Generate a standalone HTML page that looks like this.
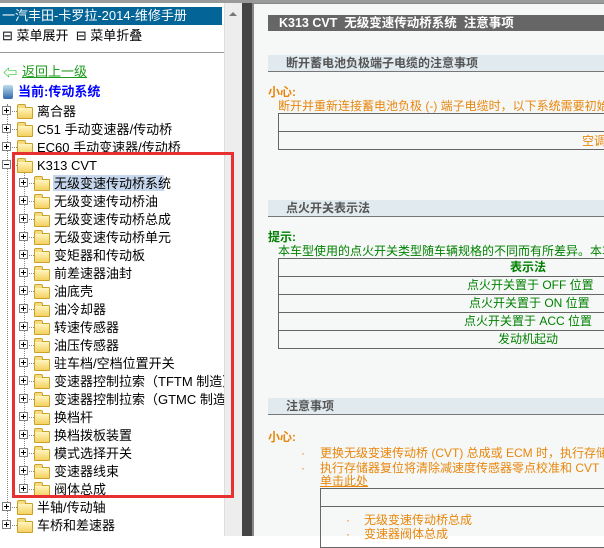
<!DOCTYPE html>
<html><head><meta charset="utf-8"><style>
*{margin:0;padding:0;box-sizing:border-box}
body{width:604px;height:536px;overflow:hidden;position:relative;background:#fff;font-family:"Liberation Sans","Noto Sans CJK SC","WenQuanYi Zen Hei",sans-serif;font-size:12px;color:#000}
.a{position:absolute;white-space:nowrap;line-height:16px}
.exp{position:absolute;width:9px;height:9px;border:1px solid #808080;background:#fff}
.exp:before{content:"";position:absolute;left:1px;top:3px;width:5px;height:1px;background:#000}
.exp.p:after{content:"";position:absolute;left:3px;top:1px;width:1px;height:5px;background:#000}
.fold{position:absolute;width:16px;height:12px;background:linear-gradient(#fff6c0,#f5d060);border:1px solid #c9a227;border-radius:1px}
.fold:before{content:"";position:absolute;left:-1px;top:-4px;width:7px;height:3px;background:#f5dc80;border:1px solid #c9a227;border-bottom:none;border-radius:2px 2px 0 0}
.dh{position:absolute;height:1px;border-top:1px dotted #888}
.or{color:#e8860c}
.gr{color:#008000}
.sec{position:absolute;left:268px;width:336px;height:17px;background:#e1ebef;border-bottom:1px solid #777;font-weight:bold;color:#555;padding-left:18px;line-height:16px;font-size:12px}
.tb{position:absolute;border:1px solid #666}
.hl{position:absolute;height:1px;background:#666}
</style></head><body>
<div class="a" style="left:0;top:0;width:604px;height:3px;background:#9a9a9a"></div>
<div class="a" style="left:0;top:7px;width:222px;height:18px;background:#036597;color:#fff;font-size:13px;line-height:18px;padding-left:2px">一汽丰田-卡罗拉-2014-维修手册</div>
<div class="a" style="left:2px;top:28px;font-size:13px">&#8863; 菜单展开 &nbsp;&#8863; 菜单折叠</div>
<div class="a" style="left:0;top:52px;width:224px;height:1px;background:#999"></div>
<div class="a" style="left:3px;top:65px;color:#0b0;font-size:14px">&#8678;</div>
<div class="a" style="left:22px;top:64px;color:#1a9a1a;text-decoration:underline;font-size:13px">返回上一级</div>
<div class="a" style="left:3px;top:85px;width:10px;height:14px;background:linear-gradient(#bde,#36a);border-radius:2px"></div>
<div class="a" style="left:18px;top:84px;color:#00f;font-weight:bold;font-size:13px">当前:传动系统</div>
<div class="a" style="left:7px;top:104px;width:1px;height:424px;border-left:1px dotted #888"></div>
<div class="a" style="left:24px;top:172px;width:1px;height:318px;border-left:1px dotted #888"></div>
<div class="a" style="left:53px;top:175px;width:111px;height:16px;background:#c6d7ed"></div>
<div id="tree"></div>
<script>
var rows=[[0,1,"离合器"],[0,1,"C51 手动变速器/传动桥"],[0,1,"EC60 手动变速器/传动桥"],[0,0,"K313 CVT"],
[1,1,"无级变速传动桥系统"],[1,1,"无级变速传动桥油"],[1,1,"无级变速传动桥总成"],[1,1,"无级变速传动桥单元"],[1,1,"变矩器和传动板"],[1,1,"前差速器油封"],[1,1,"油底壳"],[1,1,"油冷却器"],[1,1,"转速传感器"],[1,1,"油压传感器"],[1,1,"驻车档/空档位置开关"],[1,1,"变速器控制拉索（TFTM 制造）"],[1,1,"变速器控制拉索（GTMC 制造）"],[1,1,"换档杆"],[1,1,"换档拨板装置"],[1,1,"模式选择开关"],[1,1,"变速器线束"],[1,1,"阀体总成"],[0,1,"半轴/传动轴"],[0,1,"车桥和差速器"]];
var h="";
rows.forEach(function(r,i){var y=103+i*18;var x=r[0]?19:2;
h+='<div class="exp'+(r[1]?' p':'')+'" style="left:'+x+'px;top:'+(y+3)+'px"></div>';
h+='<div class="dh" style="left:'+(x+10)+'px;top:'+(y+8)+'px;width:5px"></div>';
h+='<div class="fold" style="left:'+(x+15)+'px;top:'+(y+4)+'px"></div>';
h+='<div class="a" style="left:'+(x+35)+'px;top:'+(y+1)+'px;font-size:13px">'+r[2]+'</div>';});
document.getElementById("tree").innerHTML=h;
</script>
<div class="a" style="left:224px;top:3px;width:18px;height:533px;background:#ededed;border-left:1px solid #ddd"></div>
<div class="a" style="left:229px;top:12px;width:0;height:0;border-left:4px solid transparent;border-right:4px solid transparent;border-bottom:4px solid #777"></div>
<div class="a" style="left:242px;top:3px;width:10px;height:533px;background:#444"></div>
<div class="a" style="left:12px;top:152px;width:222px;height:346px;border:3px solid #e83030;z-index:5"></div>
<div class="a" style="left:252px;top:3px;width:352px;height:533px;background:#f6f8f7;border-left:2px solid #888;border-top:1px solid #888"></div>
<div class="a" style="left:268px;top:15px;width:336px;height:16px;background:#666;color:#fff;font-weight:bold;font-size:12.5px;padding-left:11px;line-height:16px">K313 CVT &nbsp;无级变速传动桥系统 &nbsp;注意事项</div>
<div class="sec" style="top:55px">断开蓄电池负极端子电缆的注意事项</div>
<div class="a or" style="left:268px;top:84px;font-weight:bold">小心:</div>
<div class="a or" style="left:278px;top:98px">断开并重新连接蓄电池负极 (-) 端子电缆时，以下系统需要初始化</div>
<div class="tb" style="left:278px;top:113px;width:340px;height:37px"></div>
<div class="hl" style="left:278px;top:131px;width:326px"></div>
<div class="a or" style="left:582px;top:133px">空调</div>
<div class="sec" style="top:200px">点火开关表示法</div>
<div class="a gr" style="left:268px;top:229px;font-weight:bold">提示:</div>
<div class="a gr" style="left:278px;top:243px">本车型使用的点火开关类型随车辆规格的不同而有所差异。本车</div>
<div class="tb" style="left:278px;top:258px;width:340px;height:91px"></div>
<div class="hl" style="left:278px;top:276px;width:326px"></div>
<div class="hl" style="left:278px;top:294px;width:326px"></div>
<div class="hl" style="left:278px;top:312px;width:326px"></div>
<div class="hl" style="left:278px;top:330px;width:326px"></div>
<div class="a gr" style="left:510px;top:259px;font-weight:bold">表示法</div>
<div class="a gr" style="left:467px;top:277px">点火开关置于 OFF 位置</div>
<div class="a gr" style="left:469px;top:295px">点火开关置于 ON 位置</div>
<div class="a gr" style="left:464px;top:313px">点火开关置于 ACC 位置</div>
<div class="a gr" style="left:498px;top:331px">发动机起动</div>
<div class="sec" style="top:398px">注意事项</div>
<div class="a or" style="left:268px;top:429px;font-weight:bold">小心:</div>
<div class="a or" style="left:301px;top:445px">·</div>
<div class="a or" style="left:320px;top:445px">更换无级变速传动桥 (CVT) 总成或 ECM 时，执行存储</div>
<div class="a or" style="left:301px;top:460px">·</div>
<div class="a or" style="left:320px;top:460px">执行存储器复位将清除减速度传感器零点校准和 CVT</div>
<div class="a or" style="left:320px;top:473px;text-decoration:underline">单击此处</div>
<div class="tb" style="left:320px;top:488px;width:300px;height:60px"></div>
<div class="hl" style="left:320px;top:506px;width:284px"></div>
<div class="a or" style="left:346px;top:512px">·</div>
<div class="a or" style="left:364px;top:512px">无级变速传动桥总成</div>
<div class="a or" style="left:346px;top:526px">·</div>
<div class="a or" style="left:364px;top:526px">变速器阀体总成</div>
</body></html>
